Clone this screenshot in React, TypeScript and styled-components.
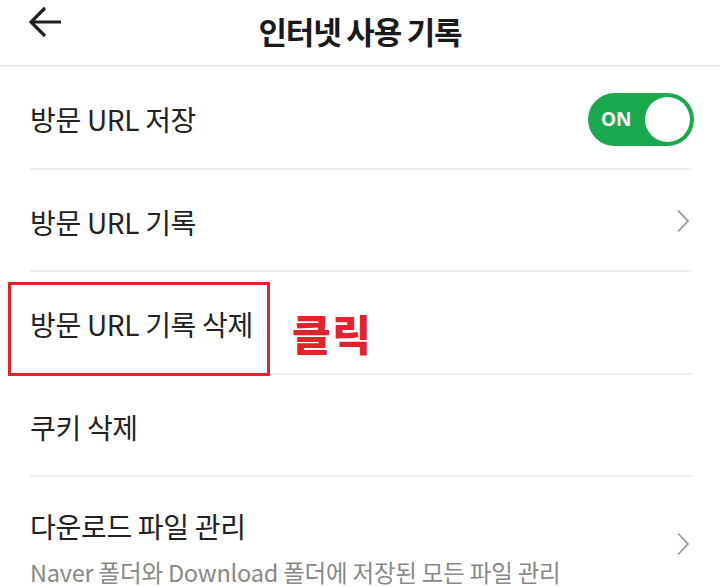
import styled, { createGlobalStyle } from "styled-components";

const GlobalStyle = createGlobalStyle`
  html, body { margin: 0; padding: 0; background: #fff; }
  body { font-family: "Noto Sans CJK KR", "Noto Sans", sans-serif; overflow: hidden; }
`;

type Item = {
  label: string;
  sub?: string;
  chevron?: boolean;
  toggle?: boolean;
  marked?: boolean;
};

const items: Item[] = [
  { label: "방문 URL 저장", toggle: true },
  { label: "방문 URL 기록", chevron: true },
  { label: "방문 URL 기록 삭제", marked: true },
  { label: "쿠키 삭제" },
  {
    label: "다운로드 파일 관리",
    sub: "Naver 폴더와 Download 폴더에 저장된 모든 파일 관리",
    chevron: true,
  },
];

const BackIcon = () => (
  <svg width="36" height="34" viewBox="0 0 36 34" fill="none">
    <path d="M33 17H3M17 3L3 17l14 14" stroke="#222" strokeWidth="3.2" strokeLinecap="butt" strokeLinejoin="miter" />
  </svg>
);

const Chevron = () => (
  <svg width="14" height="24" viewBox="0 0 14 24" fill="none">
    <path d="M2 1.5l10 10.5-10 10.5" stroke="#999" strokeWidth="1.8" />
  </svg>
);

export default function App() {
  return (
    <Page>
      <GlobalStyle />
      <Header>
        <Back><BackIcon /></Back>
        <Title>인터넷 사용 기록</Title>
      </Header>

      <List>
        {items.map((it) => (
          <Row key={it.label} $tall={!!it.sub}>
            <TextCol>
              <Label>{it.label}</Label>
              {it.sub && <Sub>{it.sub}</Sub>}
            </TextCol>
            {it.marked && (
              <>
                <Mark />
                <ClickNote>클릭</ClickNote>
              </>
            )}
            {it.toggle && (
              <Toggle>
                <ToggleText>ON</ToggleText>
                <Knob />
              </Toggle>
            )}
            {it.chevron && (
              <ChevronBox $low={!!it.sub}>
                <Chevron />
              </ChevronBox>
            )}
          </Row>
        ))}
      </List>
    </Page>
  );
}

/* ===== styled ===== */
const Page = styled.div`width: 720px; height: 587px; overflow: hidden; background: #fff;`;

const Header = styled.div`
  position: relative; height: 65px; display: flex; align-items: center; justify-content: center;
  border-bottom: 2px solid #ececec;
`;
const Back = styled.div`position: absolute; left: 28px; top: 5px; display: flex;`;
const Title = styled.h1`
  margin: 0 0 5px; font-size: 31px; font-weight: 700; color: #1a1a1a; letter-spacing: -1.2px;
`;

const List = styled.div`display: flex; flex-direction: column;`;

const Row = styled.div<{ $tall: boolean }>`
  position: relative; display: flex; align-items: ${(p) => (p.$tall ? "flex-start" : "center")};
  flex: none; height: ${(p) => (p.$tall ? "130px" : "102.5px")}; margin: 0 28px 0 30px;
  padding-top: ${(p) => (p.$tall ? "25px" : "0")};
  box-sizing: border-box;
  border-bottom: 2px solid #efefef;
`;
const TextCol = styled.div`display: flex; flex-direction: column; flex: 1; min-width: 0;`;
const Label = styled.div`
  font-size: 28px; color: #222; line-height: 40px; letter-spacing: -0.3px; margin-top: 4px;
`;
const Sub = styled.div`
  font-size: 23.5px; color: #888; line-height: 32px; margin-top: 10px; white-space: nowrap;
  letter-spacing: -0.2px;
`;

const Mark = styled.div`
  position: absolute; left: -22px; top: 10px; width: 262px; height: 94px;
  border: 3px solid #e3232b; box-sizing: border-box; pointer-events: none;
`;
const ClickNote = styled.div`
  position: absolute; left: 262px; top: 36px;
  font-size: 42px; font-weight: 900; color: #e3232b; letter-spacing: 1.5px; line-height: 50px;
`;

const Toggle = styled.div`
  width: 106px; height: 53px; border-radius: 27px; background: #1aa94c;
  display: flex; align-items: center; justify-content: space-between;
  padding: 0 4px 0 13px; box-sizing: border-box; margin-top: 4px; margin-right: -2px;
`;
const ToggleText = styled.span`
  font-family: "Noto Sans", "Liberation Sans", sans-serif;
  font-size: 19px; font-weight: 700; color: #fff;
`;
const Knob = styled.span`
  width: 45px; height: 45px; border-radius: 50%; background: #fff;
`;

const ChevronBox = styled.div<{ $low: boolean }>`
  display: flex; margin-right: 2px; margin-top: ${(p) => (p.$low ? "30px" : "2px")};
`;
